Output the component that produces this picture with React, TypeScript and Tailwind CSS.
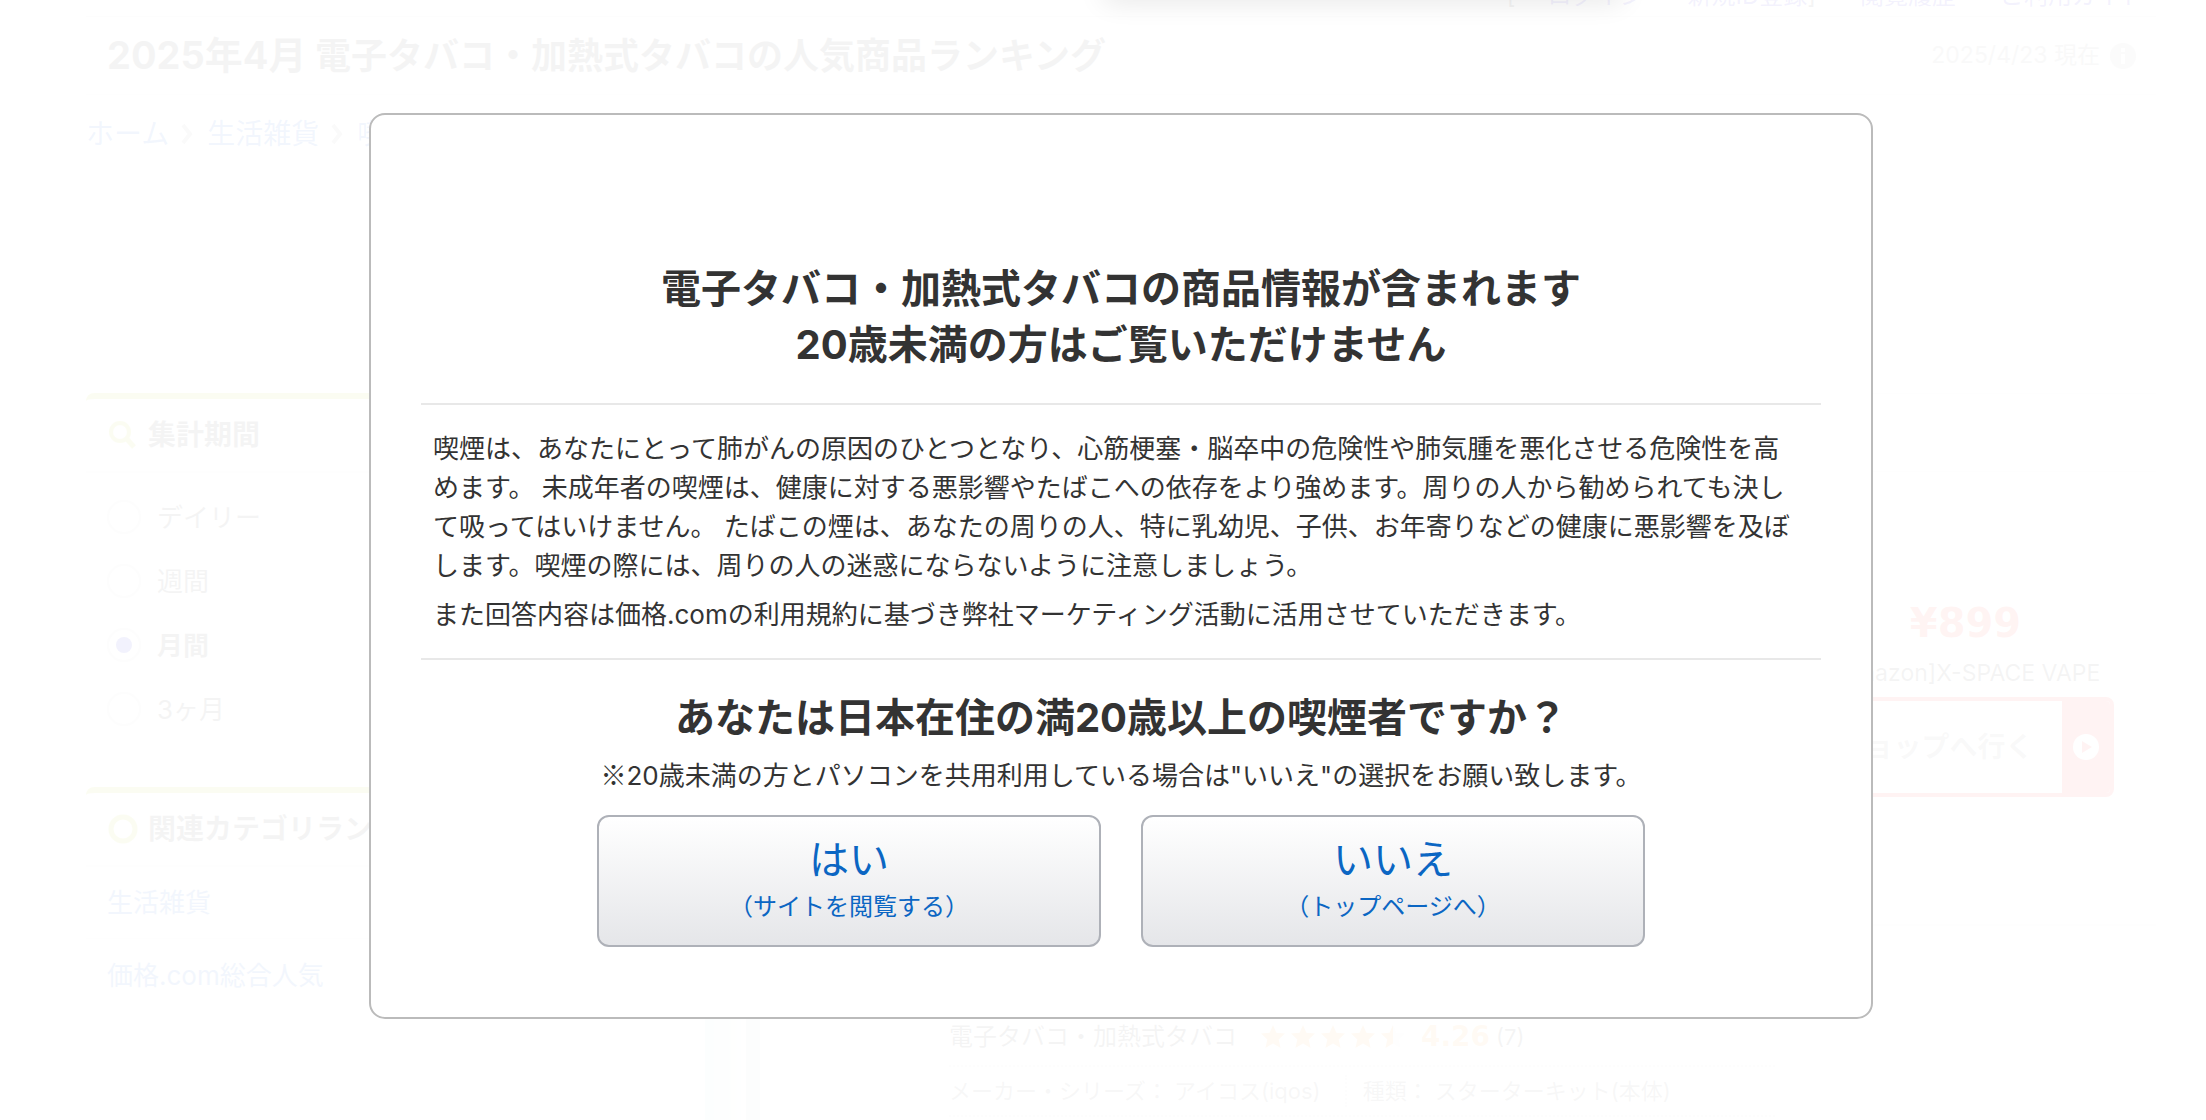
import { ReactNode, useState } from "react";

const periods = [
  { id: "daily", label: "デイリー" },
  { id: "weekly", label: "週間" },
  { id: "monthly", label: "月間" },
  { id: "quarter", label: "3ヶ月" },
];

const relatedCategories = ["生活雑貨", "価格.com総合人気"];

const STAR = "M12 0l3.400 7.800 8.600.7-6.300 5.900 1.900 8.600-7.600-4.600-7.600 4.600 1.900-8.600L0 8.500l8.600-.7z";
const HALF_STAR = "M12 0v18.400l-7.600 4.600 1.900-8.600L0 8.500l8.600-.7z";

function Star({ half = false }: { half?: boolean }) {
  return (
    <svg viewBox="0 0 24 24" className="size-6" aria-hidden="true">
      <path d={STAR} fill={half ? "#dddddd" : "#ff9933"} />
      {half && <path d={HALF_STAR} fill="#ff9933" />}
    </svg>
  );
}

function Chevron() {
  return (
    <svg viewBox="0 0 12 20" className="mx-3 h-5 w-3" aria-hidden="true">
      <path d="M2 1l7 9-7 9" fill="none" stroke="#999999" strokeWidth="4" />
    </svg>
  );
}

function TopLinks() {
  return (
    <nav className="flex h-[17px] items-end justify-end overflow-hidden border-b border-[#cccccc] pr-3 pb-2 text-2xl leading-6 text-[#2200cc]">
      <span className="mr-8 text-[#333333]">[</span>
      <a href="#" className="mr-11">ログイン</a>
      <a href="#">新規ID登録</a>
      <span className="mr-11 text-[#333333]">]</span>
      <a href="#" className="mr-11">閲覧履歴</a>
      <a href="#">ご利用ガイド</a>
    </nav>
  );
}

function SideCard({ icon, title, children }: { icon: ReactNode; title: string; children: ReactNode }) {
  return (
    <section className="overflow-hidden rounded-lg border-t-6 border-[#b4c800] bg-[#eeeeee]">
      <h2 className="flex h-[74px] items-center gap-2.5 border-b-2 border-[#dddddd] pl-[22px] text-[28px] font-bold whitespace-nowrap">
        {icon}
        {title}
      </h2>
      {children}
    </section>
  );
}

function Sidebar() {
  const [period, setPeriod] = useState("monthly");

  return (
    <aside className="flex w-[400px] shrink-0 flex-col gap-[31px]">
      <SideCard
        title="集計期間"
        icon={
          <svg viewBox="0 0 30 30" className="size-[30px]" fill="none" stroke="#b4c800" aria-hidden="true">
            <circle cx="12" cy="12" r="9" strokeWidth="4" />
            <path d="M18 18l8 9" strokeWidth="5" />
          </svg>
        }
      >
        <div className="pt-3 pb-[15px]">
          {periods.map((p) => (
            <label key={p.id} className="flex h-16 items-center gap-4 pl-[21px] text-[26px] has-checked:font-bold">
              <input
                type="radio"
                name="period"
                checked={period === p.id}
                onChange={() => setPeriod(p.id)}
                className="grid size-[34px] appearance-none place-items-center rounded-full border-2 border-[#cccccc] bg-white before:size-4 before:rounded-full checked:before:bg-[#0000cc]"
              />
              {p.label}
            </label>
          ))}
        </div>
      </SideCard>

      <SideCard
        title="関連カテゴリランキング"
        icon={
          <svg viewBox="0 0 30 30" className="size-[30px]" fill="none" stroke="#b4c800" aria-hidden="true">
            <circle cx="15" cy="15" r="12" strokeWidth="5" />
          </svg>
        }
      >
        <ul>
          {relatedCategories.map((name) => (
            <li key={name} className="flex h-[72px] items-center border-b border-[#dddddd] pl-[21px] text-[26px] last:border-b-0">
              <a href="#" className="text-[#0055cc]">{name}</a>
            </li>
          ))}
        </ul>
      </SideCard>
    </aside>
  );
}

function Products() {
  return (
    <main className="min-w-0 flex-1 border-t border-[#dddddd]">
      <div className="h-[78px] border-b border-[#dddddd]" />

      <article className="flex h-[454px] justify-end border-b-2 border-[#dddddd]">
        <div className="flex w-[381px] flex-col items-center pt-[127px]">
          <p className="font-['DejaVu_Sans'] text-[40px] leading-12 font-bold text-[#ff3322]">¥899</p>
          <p className="mt-2.5 text-[23px] leading-8">[Amazon]X-SPACE VAPE</p>
          <button className="mt-2 flex h-[100px] w-[296px] items-stretch overflow-hidden rounded-lg border-4 border-[#ff2222] bg-white text-[28px] font-bold">
            <span className="flex flex-1 items-center justify-center pr-3 text-[#888888]">ショップへ行く</span>
            <span className="flex w-12 items-center justify-center bg-[#ff2222]">
              <svg viewBox="0 0 26 26" className="size-[26px]" aria-hidden="true">
                <circle cx="13" cy="13" r="13" fill="#ffffff" />
                <path d="M9 7l10 6-10 6z" fill="#ff2222" />
              </svg>
            </span>
          </button>
        </div>
      </article>

      <article className="flex text-2xl leading-8">
        <div className="flex w-[423px] shrink-0 pl-[179px]">
          <div className="flex h-[195px] w-[55px] justify-between">
            <div className="w-9 bg-linear-to-r from-[#c0e4de] to-[#e6f2f0]" />
            <div className="w-3.5 bg-[#c8d8d8]" />
          </div>
        </div>
        <div className="min-w-0 flex-1 pt-[95px]">
          <div className="flex items-center border-b-2 border-dotted border-[#cccccc] pb-3">
            <span className="mr-6">電子タバコ・加熱式タバコ</span>
            <span className="flex gap-1.5">
              <Star />
              <Star />
              <Star />
              <Star />
              <Star half />
            </span>
            <strong className="ml-4 font-['DejaVu_Sans'] text-[28px] text-[#ff9933]">4.26</strong>
            <span className="ml-1.5 text-[22px]">(7)</span>
          </div>
          <div className="flex items-center border-b-2 border-dotted border-[#cccccc] py-2 text-[22px] text-[#666666]">
            <span className="border-r-2 border-dotted border-[#cccccc] pr-6">メーカー・シリーズ： アイコス(iqos)</span>
            <span className="pl-4">種類： スターターキット(本体)</span>
          </div>
        </div>
        <div className="w-[381px] shrink-0" />
      </article>
    </main>
  );
}

function AnswerLink({ answer, note }: { answer: string; note: string }) {
  return (
    <a
      href="#"
      className="flex h-[132px] flex-1 flex-col items-center justify-center rounded-xl border-2 border-[#aeb1b8] bg-linear-to-b from-white to-[#e5e6e9] text-[#0b66c3]"
    >
      <span className="text-[40px] leading-[52px]">{answer}</span>
      <span className="text-2xl leading-[42px]">{note}</span>
    </a>
  );
}

function AgeGate() {
  return (
    <div className="absolute inset-0 bg-white/95 pt-[113px] pr-[50px] pl-[86px]">
      <div
        role="dialog"
        aria-modal="true"
        aria-labelledby="age-gate-title"
        className="mx-auto max-w-[1504px] rounded-2xl border-2 border-[#bbbbbb] bg-white px-[50px] pt-[146px] pb-[70px]"
      >
        <h2 id="age-gate-title" className="text-center text-[40px] leading-14 font-bold">
          電子タバコ・加熱式タバコの商品情報が含まれます
          <br />
          20歳未満の方はご覧いただけません
        </h2>
        <div className="mt-[30px] space-y-2.5 border-y-2 border-[#e8e8e8] py-6 pr-6 pl-3 text-[26px] leading-[39px]">
          <p>
            喫煙は、あなたにとって肺がんの原因のひとつとなり、心筋梗塞・脳卒中の危険性や肺気腫を悪化させる危険性を高めます。
            未成年者の喫煙は、健康に対する悪影響やたばこへの依存をより強めます。周りの人から勧められても決して吸ってはいけません。
            たばこの煙は、あなたの周りの人、特に乳幼児、子供、お年寄りなどの健康に悪影響を及ぼします。喫煙の際には、周りの人の迷惑にならないように注意しましょう。
          </p>
          <p>また回答内容は価格.comの利用規約に基づき弊社マーケティング活動に活用させていただきます。</p>
        </div>
        <h3 className="mt-[30px] text-center text-[40px] leading-14 font-bold">
          あなたは日本在住の満20歳以上の喫煙者ですか？
        </h3>
        <p className="mt-2.5 text-center text-[26px] leading-[39px]">
          <span className="font-['Noto_Sans_CJK_JP',sans-serif] leading-none">※</span>
          20歳未満の方とパソコンを共用利用している場合は"いいえ"の選択をお願い致します。
        </p>
        <div className="mx-auto mt-5 flex max-w-[1048px] gap-10">
          <AnswerLink answer="はい" note="（サイトを閲覧する）" />
          <AnswerLink answer="いいえ" note="（トップページへ）" />
        </div>
      </div>
    </div>
  );
}

export default function App() {
  return (
    <div lang="ja" className="relative h-screen overflow-hidden bg-white font-['Inter','Noto_Sans_CJK_JP',sans-serif] text-[#333333]">
      <div className="pr-[50px] pl-[86px]">
        <TopLinks />

        <header className="flex h-[78px] items-center justify-between border-b border-[#dddddd] bg-[#eeeeee] pr-5 pl-[21px]">
          <h1 className="text-4xl font-bold">
            <span className="text-[38px]">2025年4月</span> 電子タバコ・加熱式タバコの人気商品ランキング
          </h1>
          <p className="flex items-center gap-2.5 text-[23px] text-[#888888]">
            2025/4/23 現在
            <svg viewBox="0 0 26 26" className="size-[26px]" aria-hidden="true">
              <circle cx="13" cy="13" r="13" fill="#aaaaaa" />
              <path d="M11 5h4v4h-4zM11 11h4v10h-4z" fill="#ffffff" />
            </svg>
          </p>
        </header>

        <nav className="mt-4 flex h-[46px] items-center text-[28px] text-[#0055cc]">
          <a href="#">ホーム</a>
          <Chevron />
          <a href="#" className="ml-0.5">生活雑貨</a>
          <Chevron />
          <a href="#" className="ml-0.5">喫煙具</a>
        </nav>

        <div className="mt-[236px] flex gap-10">
          <Sidebar />
          <Products />
        </div>
      </div>

      <AgeGate />

      {/* shadow of the bar above the page */}
      <div className="absolute bottom-full left-1/2 h-5 w-[520px] rounded-lg shadow-[0_0_28px_rgba(0,0,0,0.12)]" />
    </div>
  );
}
